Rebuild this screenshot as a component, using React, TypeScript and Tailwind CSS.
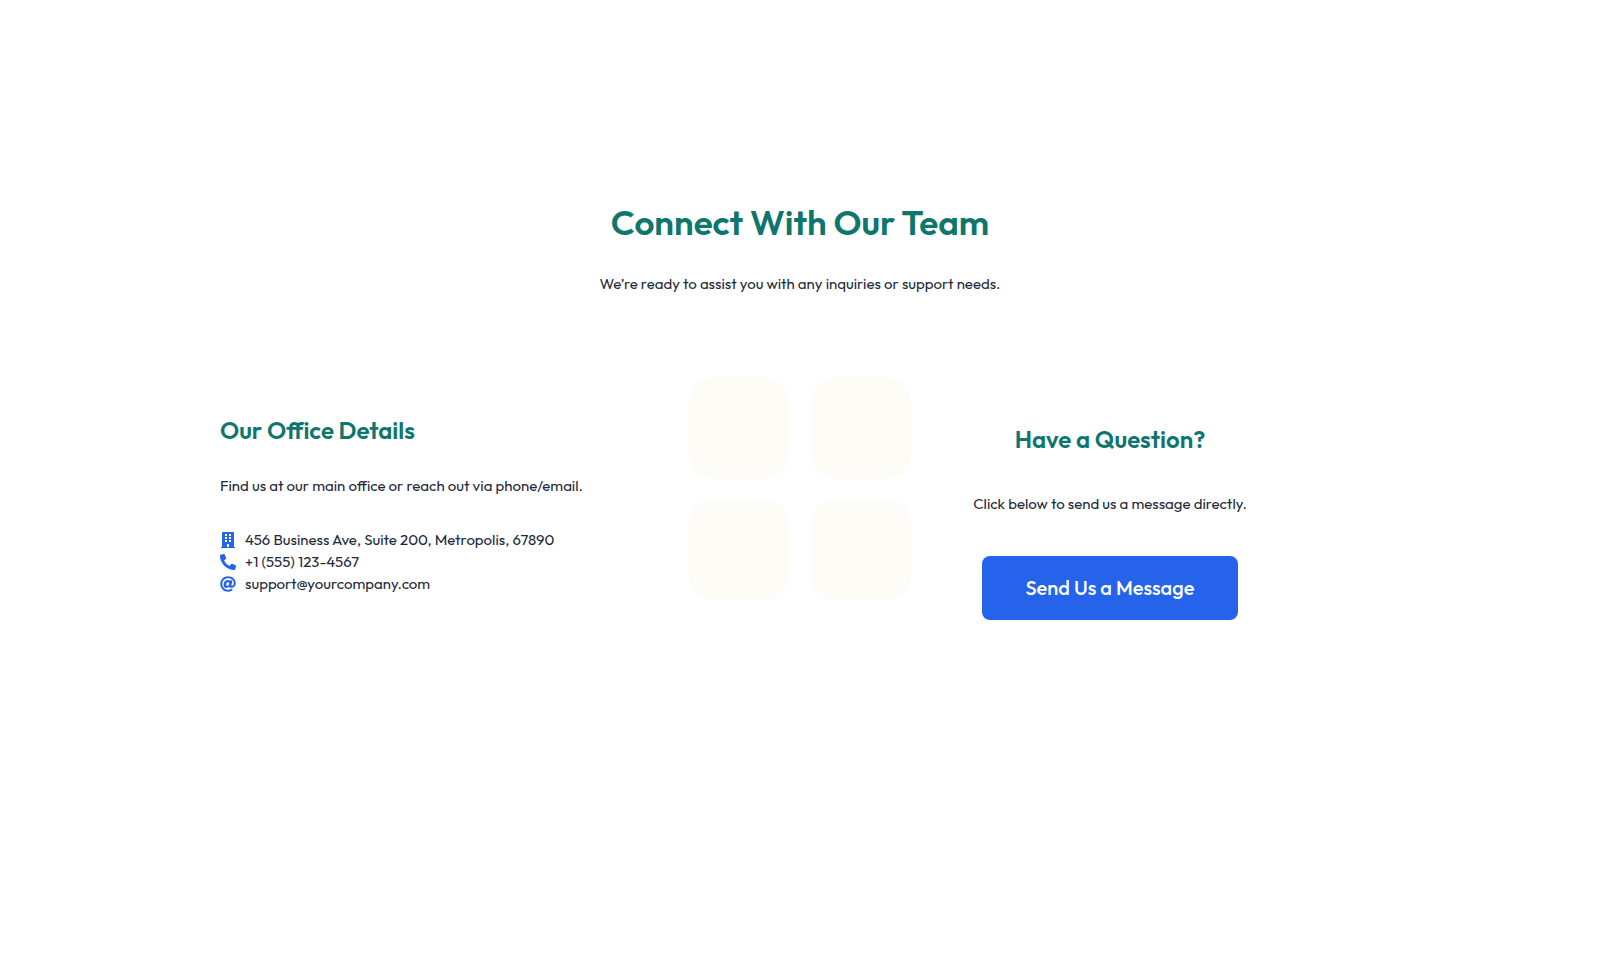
import type { ReactNode } from "react";
import { FaAt, FaBuilding, FaPhoneAlt } from "react-icons/fa";

export default function ContactPage() {
  return (
    <main className="min-h-screen bg-white px-6 pt-[198px] pb-24 font-['Outfit','Lato',sans-serif] text-[15px] leading-[22px] text-[#1e293b]">
      <section className="mx-auto flex max-w-[1160px] flex-col gap-[83px]">
        <header className="flex flex-col items-center gap-[27px] text-center">
          <h1 className="text-[35px] leading-[48px] font-semibold text-[#0f766e]">
            Connect With Our Team
          </h1>
          <p>We’re ready to assist you with any inquiries or support needs.</p>
        </header>

        <div className="grid items-start gap-[60px] lg:grid-cols-[1fr_auto_1fr]">
          <OfficeDetails />
          <Tiles />
          <Question />
        </div>
      </section>
    </main>
  );
}

function OfficeDetails() {
  return (
    <div className="flex flex-col gap-8 lg:pt-[39px]">
      <SectionTitle>Our Office Details</SectionTitle>
      <p>Find us at our main office or reach out via phone/email.</p>
      <ul className="flex flex-col">
        <ContactItem icon={<FaBuilding />}>
          456 Business Ave, Suite 200, Metropolis, 67890
        </ContactItem>
        <ContactItem icon={<FaPhoneAlt />}>+1 (555) 123-4567</ContactItem>
        <ContactItem icon={<FaAt />}>support@yourcompany.com</ContactItem>
      </ul>
    </div>
  );
}

type ContactItemProps = {
  icon: ReactNode;
  children: ReactNode;
};

function ContactItem({ icon, children }: ContactItemProps) {
  return (
    <li className="flex items-center gap-[9px]">
      <span className="text-[16px] text-[#2563eb]">{icon}</span>
      {children}
    </li>
  );
}

function Tiles() {
  return (
    <div className="grid grid-cols-[100px_100px] justify-center gap-[22px]">
      {[0, 1, 2, 3].map((tile) => (
        <div key={tile} className="h-[100px] rounded-3xl bg-[#fdfcf7]" />
      ))}
    </div>
  );
}

function Question() {
  return (
    <div className="flex w-[278px] flex-col items-center gap-[41px] justify-self-center text-center lg:justify-self-start lg:pt-12">
      <SectionTitle>Have a Question?</SectionTitle>
      <p>Click below to send us a message directly.</p>
      <button
        type="button"
        className="h-16 w-64 rounded-lg bg-[#2563eb] text-[20px] font-medium text-white hover:bg-[#1d4ed8]"
      >
        Send Us a Message
      </button>
    </div>
  );
}

function SectionTitle({ children }: { children: ReactNode }) {
  return (
    <h2 className="text-[24px] leading-[26px] font-semibold text-[#0f766e]">
      {children}
    </h2>
  );
}
